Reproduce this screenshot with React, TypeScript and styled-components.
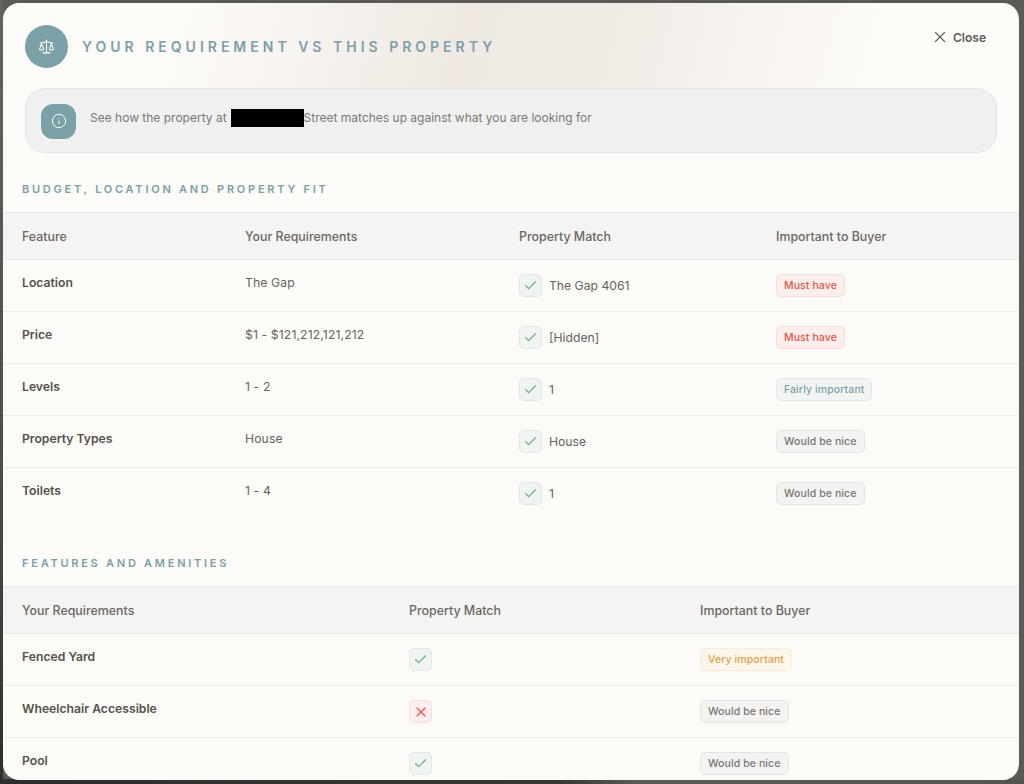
import { createGlobalStyle, styled } from "styled-components"
import { Check, Info, Scale, X } from "lucide-react"

const GlobalStyle = createGlobalStyle`
  html, body {
    margin: 0;
    padding: 0;
    height: 100%;
    overflow: hidden;
    background: #5a5a57;
    font-family: Inter, "Noto Sans", sans-serif;
  }
  * {
    box-sizing: border-box;
  }
`

const Backdrop = styled.div`
  width: 1024px;
  height: 784px;
  padding: 3px 5px 4px 3px;
  background:
    linear-gradient(90deg, #2e2d2b 0, #3a3835 55%, #5c5b58 62%, #55544f 100%) bottom / 100% 5px no-repeat,
    linear-gradient(180deg, #63635f 0, #4d4c49 60%, #2f2e2c 100%) left / 3px 100% no-repeat,
    #5a5a57;
`

const Modal = styled.div`
  height: 100%;
  overflow: hidden;
  border-radius: 16px;
  background-color: #fdfbf8;
`

const Top = styled.div`
  height: 150px;
  background-image: linear-gradient(
    105deg,
    rgba(240, 233, 227, 0) 17%,
    #f0e9e3 44%,
    #f1ebe5 58%,
    rgba(240, 233, 227, 0) 84%
  );
`

const Header = styled.header`
  display: flex;
  justify-content: space-between;
  padding: 22px 33px 0 22px;
  height: 85px;
`

const TitleRow = styled.div`
  display: flex;
  align-items: flex-start;
  gap: 14px;
`

const Badge = styled.div`
  width: 43px;
  height: 43px;
  border-radius: 50%;
  background: #7ba0a8;
  color: #fdfbf8;
  display: flex;
  align-items: center;
  justify-content: center;
`

const Title = styled.h1`
  margin: 0;
  font-size: 14px;
  line-height: 43px;
  font-weight: 600;
  letter-spacing: 4px;
  color: #7ba0a8;
`

const CloseButton = styled.button`
  display: flex;
  align-items: center;
  gap: 4px;
  height: 24px;
  padding: 0;
  border: 0;
  background: none;
  font: 600 12px Inter, sans-serif;
  color: #5f5b56;
`

const Notice = styled.div`
  display: flex;
  align-items: center;
  gap: 14px;
  height: 65px;
  margin: 0 22px;
  padding: 0 15px;
  border: 1px solid #e2e6e6;
  border-radius: 20px;
  background: #eff1f1;
  font-size: 12px;
  color: #7c7873;
`

const NoticeIcon = styled.div`
  width: 35px;
  height: 35px;
  margin-top: 1px;
  border-radius: 12px;
  background: #7ba0a8;
  color: #fdfbf8;
  display: flex;
  align-items: center;
  justify-content: center;
`

const NoticeText = styled.span`
  display: flex;
  align-items: center;
  margin-top: -6px;
`

const Redacted = styled.span`
  display: inline-block;
  width: 73px;
  height: 18px;
  margin: 0 0 0 4px;
  background: #000;
`

const SectionTitle = styled.h2`
  margin: 0;
  padding: 0 19px;
  font-size: 11px;
  line-height: 14px;
  font-weight: 600;
  letter-spacing: 2.75px;
  color: #7ba0a8;
`

const Section = styled.section<{ $top: number }>`
  padding-top: ${(p) => p.$top}px;
`

const HeadRow = styled.div<{ $columns: string }>`
  display: grid;
  grid-template-columns: ${(p) => p.$columns};
  align-items: center;
  height: 48px;
  margin-top: 16px;
  padding-left: 19px;
  border-top: 1px solid #e9e8e5;
  border-bottom: 1px solid #e9e8e5;
  background: #f5f4f2;
  font-size: 12.4px;
  font-weight: 500;
  color: #6b6762;
`

const Row = styled.div<{ $columns: string }>`
  display: grid;
  grid-template-columns: ${(p) => p.$columns};
  align-items: center;
  height: 52px;
  padding-left: 19px;
  border-bottom: 1px solid #edece9;
  font-size: 12.2px;
  color: #66625d;

  &:last-child {
    border-bottom-color: transparent;
  }
`

const Label = styled.span`
  font-weight: 600;
  color: #55514c;
  margin-top: -6px;
`

const Plain = styled.span`
  margin-top: -6px;
  letter-spacing: 0.12px;
`

const Match = styled.span`
  display: flex;
  align-items: center;
  gap: 7px;
`

const MatchIcon = styled.span<{ $ok: boolean }>`
  width: 23px;
  height: 23px;
  border-radius: 5px;
  display: flex;
  align-items: center;
  justify-content: center;
  border: 1px solid ${(p) => (p.$ok ? "#e0e9e3" : "#fadcd9")};
  background: ${(p) => (p.$ok ? "#f0f4f0" : "#fdeeec")};
  color: ${(p) => (p.$ok ? "#66a97c" : "#e5534b")};
`

const tones = {
  must: { fg: "#e2584f", bg: "#fdeeeb", line: "#fadcd8" },
  fairly: { fg: "#7ba0a8", bg: "#f2f4f3", line: "#e3e8e7" },
  nice: { fg: "#7a7671", bg: "#f4f3f1", line: "#e6e5e2" },
  very: { fg: "#dfa24a", bg: "#fdf6ec", line: "#f8ecd9" },
}

const Pill = styled.span<{ $tone: keyof typeof tones }>`
  justify-self: start;
  display: inline-flex;
  align-items: center;
  height: 23px;
  padding: 0 7px;
  border-radius: 5px;
  font-size: 10.5px;
  font-weight: 500;
  letter-spacing: 0.1px;
  color: ${(p) => tones[p.$tone].fg};
  background: ${(p) => tones[p.$tone].bg};
  border: 1px solid ${(p) => tones[p.$tone].line};
`

const fitColumns = "223px 274px 257px 1fr"
const amenityColumns = "387px 291px 1fr"

const fitRows: [string, string, string, keyof typeof tones, string][] = [
  ["Location", "The Gap", "The Gap 4061", "must", "Must have"],
  ["Price", "$1 - $121,212,121,212", "[Hidden]", "must", "Must have"],
  ["Levels", "1 - 2", "1", "fairly", "Fairly important"],
  ["Property Types", "House", "House", "nice", "Would be nice"],
  ["Toilets", "1 - 4", "1", "nice", "Would be nice"],
]

const amenityRows: [string, boolean, keyof typeof tones, string][] = [
  ["Fenced Yard", true, "very", "Very important"],
  ["Wheelchair Accessible", false, "nice", "Would be nice"],
  ["Pool", true, "nice", "Would be nice"],
]

function MatchMark({ ok }: { ok: boolean }) {
  return (
    <MatchIcon $ok={ok}>
      {ok ? <Check size={15} strokeWidth={1.75} /> : <X size={16} strokeWidth={1.75} />}
    </MatchIcon>
  )
}

export default function App() {
  return (
    <Backdrop>
      <GlobalStyle />
      <Modal>
        <Top>
          <Header>
            <TitleRow>
              <Badge>
                <Scale size={17} strokeWidth={1.5} />
              </Badge>
              <Title>YOUR REQUIREMENT VS THIS PROPERTY</Title>
            </TitleRow>
            <CloseButton>
              <X size={18} strokeWidth={1.5} />
              Close
            </CloseButton>
          </Header>

          <Notice>
            <NoticeIcon>
              <Info size={16} strokeWidth={1.5} />
            </NoticeIcon>
            <NoticeText>
              See how the property at
              <Redacted />
              Street matches up against what you are looking for
            </NoticeText>
          </Notice>
        </Top>

        <Section $top={29}>
          <SectionTitle>BUDGET, LOCATION AND PROPERTY FIT</SectionTitle>
          <HeadRow $columns={fitColumns}>
            <span>Feature</span>
            <span>Your Requirements</span>
            <span>Property Match</span>
            <span>Important to Buyer</span>
          </HeadRow>
          {fitRows.map(([label, wanted, found, tone, note]) => (
            <Row key={label} $columns={fitColumns}>
              <Label>{label}</Label>
              <Plain>{wanted}</Plain>
              <Match>
                <MatchMark ok />
                {found}
              </Match>
              <Pill $tone={tone}>{note}</Pill>
            </Row>
          ))}
        </Section>

        <Section $top={36}>
          <SectionTitle>FEATURES AND AMENITIES</SectionTitle>
          <HeadRow $columns={amenityColumns}>
            <span>Your Requirements</span>
            <span>Property Match</span>
            <span>Important to Buyer</span>
          </HeadRow>
          {amenityRows.map(([label, ok, tone, note]) => (
            <Row key={label} $columns={amenityColumns}>
              <Label>{label}</Label>
              <Match>
                <MatchMark ok={ok} />
              </Match>
              <Pill $tone={tone}>{note}</Pill>
            </Row>
          ))}
        </Section>
      </Modal>
    </Backdrop>
  )
}
